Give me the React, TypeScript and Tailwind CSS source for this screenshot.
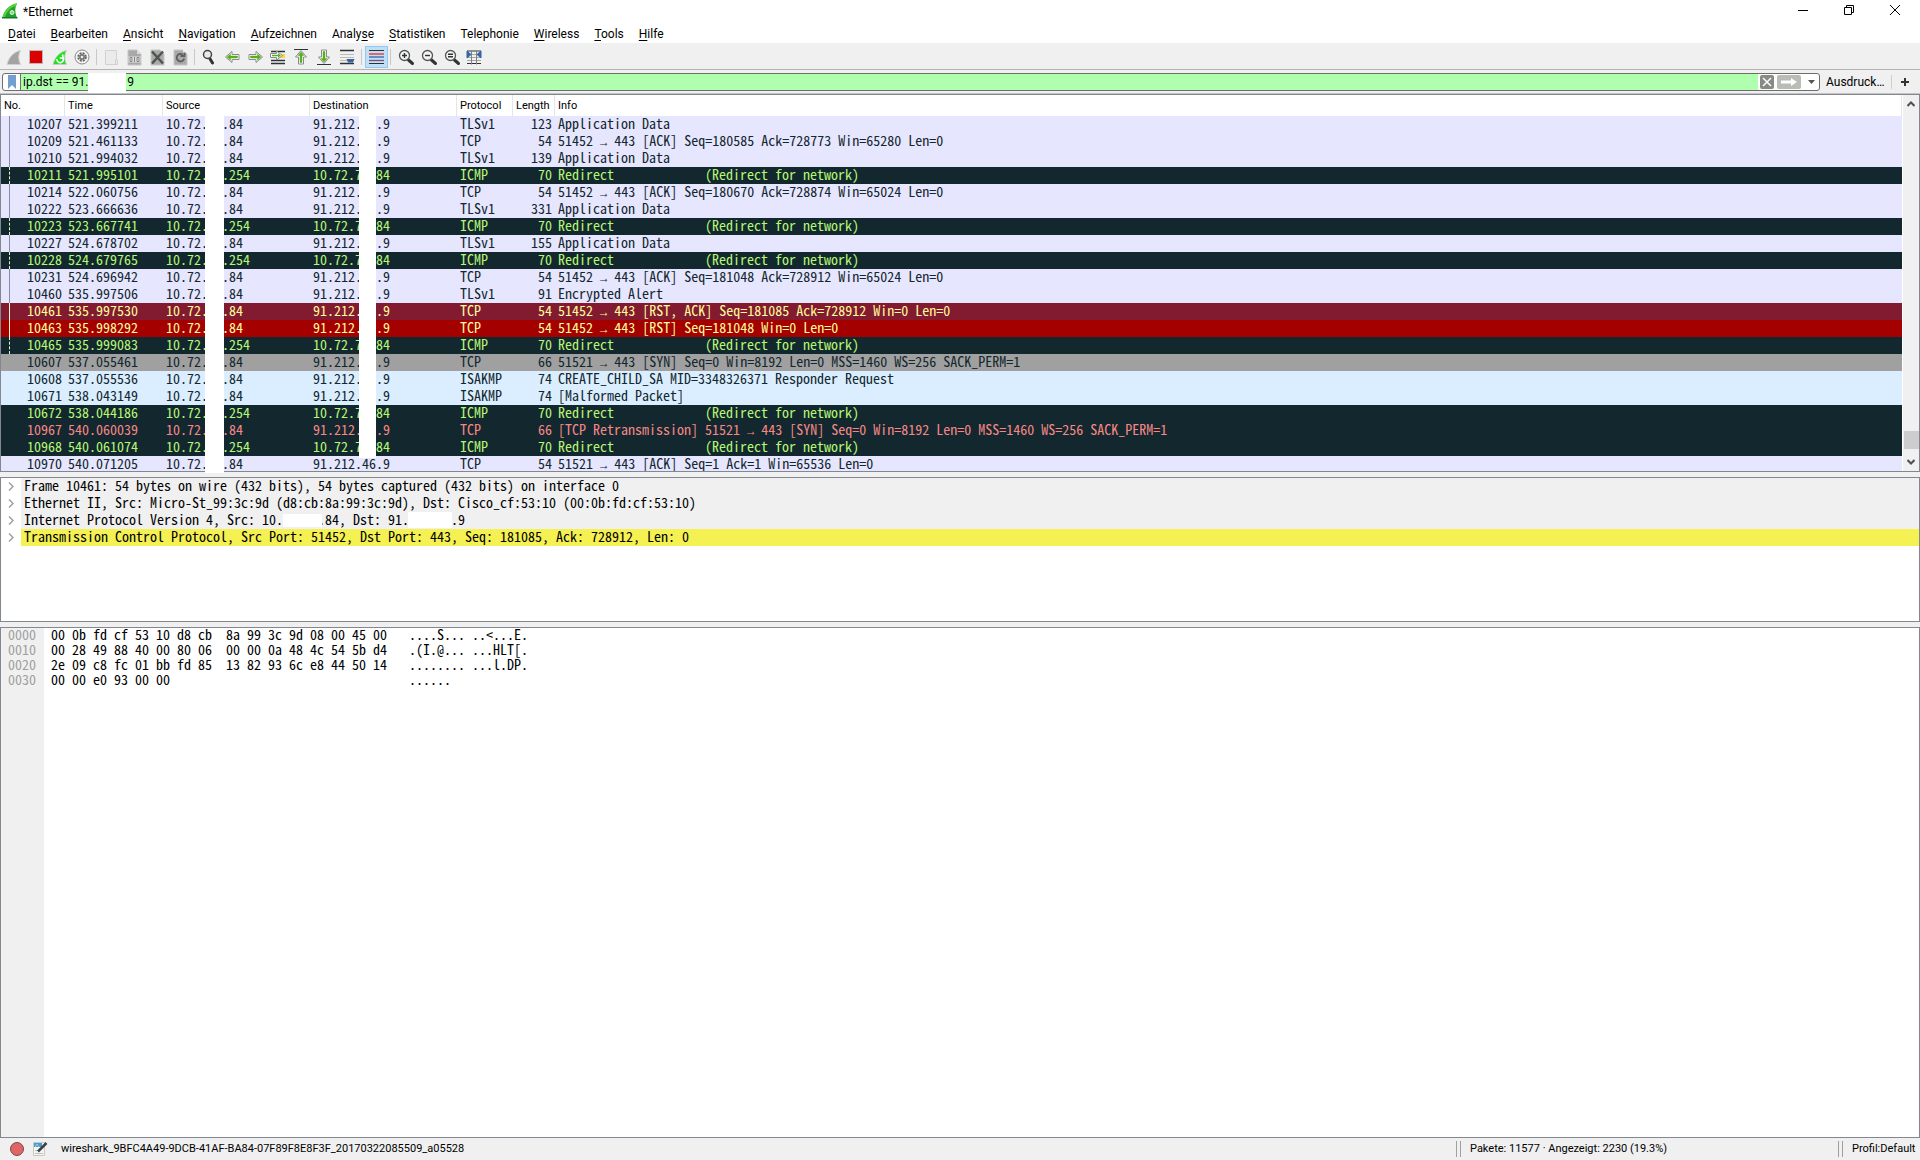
import type { ReactNode } from "react";

type Kind = "tls" | "icmp" | "rstack" | "rst" | "syn" | "isakmp" | "bad";
type Packet = [number, string, string, string, string, number, string, Kind, string];

const kinds: Record<Kind, string> = {
    tls: "bg-[#e7e6ff] text-[#12272e]",
    icmp: "bg-[#12272e] text-[#b7f774]",
    rstack: "bg-[#821a30] text-[#fffc9c]",
    rst: "bg-[#a40000] text-[#fffc9c]",
    syn: "bg-[#a0a0a0] text-[#12272e]",
    isakmp: "bg-[#daeeff] text-[#12272e]",
    bad: "bg-[#12272e] text-[#f78787]",
};

const lines: Record<string, string> = {
    solid: "border-l border-[#8b8aa5]",
    light: "border-l border-[#fffcc8]",
    dashed: "border-l border-dashed border-[#dbfbb9]",
    none: "border-l border-transparent",
};

const HOST = "10.72.  .84";
const GATE = "10.72.  .254";
const DEST = "91.212.  .9";
const BACK = "10.72.7  84";
const REDIRECT = "Redirect             (Redirect for network)";

const packets: Packet[] = [
    [10207, "521.399211", HOST, DEST, "TLSv1", 123, "Application Data", "tls", "solid"],
    [10209, "521.461133", HOST, DEST, "TCP", 54, "51452 → 443 [ACK] Seq=180585 Ack=728773 Win=65280 Len=0", "tls", "solid"],
    [10210, "521.994032", HOST, DEST, "TLSv1", 139, "Application Data", "tls", "solid"],
    [10211, "521.995101", GATE, BACK, "ICMP", 70, REDIRECT, "icmp", "dashed"],
    [10214, "522.060756", HOST, DEST, "TCP", 54, "51452 → 443 [ACK] Seq=180670 Ack=728874 Win=65024 Len=0", "tls", "solid"],
    [10222, "523.666636", HOST, DEST, "TLSv1", 331, "Application Data", "tls", "solid"],
    [10223, "523.667741", GATE, BACK, "ICMP", 70, REDIRECT, "icmp", "dashed"],
    [10227, "524.678702", HOST, DEST, "TLSv1", 155, "Application Data", "tls", "solid"],
    [10228, "524.679765", GATE, BACK, "ICMP", 70, REDIRECT, "icmp", "dashed"],
    [10231, "524.696942", HOST, DEST, "TCP", 54, "51452 → 443 [ACK] Seq=181048 Ack=728912 Win=65024 Len=0", "tls", "solid"],
    [10460, "535.997506", HOST, DEST, "TLSv1", 91, "Encrypted Alert", "tls", "solid"],
    [10461, "535.997530", HOST, DEST, "TCP", 54, "51452 → 443 [RST, ACK] Seq=181085 Ack=728912 Win=0 Len=0", "rstack", "light"],
    [10463, "535.998292", HOST, DEST, "TCP", 54, "51452 → 443 [RST] Seq=181048 Win=0 Len=0", "rst", "light"],
    [10465, "535.999083", GATE, BACK, "ICMP", 70, REDIRECT, "icmp", "dashed"],
    [10607, "537.055461", HOST, DEST, "TCP", 66, "51521 → 443 [SYN] Seq=0 Win=8192 Len=0 MSS=1460 WS=256 SACK_PERM=1", "syn", "none"],
    [10608, "537.055536", HOST, DEST, "ISAKMP", 74, "CREATE_CHILD_SA MID=3348326371 Responder Request", "isakmp", "none"],
    [10671, "538.043149", HOST, DEST, "ISAKMP", 74, "[Malformed Packet]", "isakmp", "none"],
    [10672, "538.044186", GATE, BACK, "ICMP", 70, REDIRECT, "icmp", "none"],
    [10967, "540.060039", HOST, DEST, "TCP", 66, "[TCP Retransmission] 51521 → 443 [SYN] Seq=0 Win=8192 Len=0 MSS=1460 WS=256 SACK_PERM=1", "bad", "none"],
    [10968, "540.061074", GATE, BACK, "ICMP", 70, REDIRECT, "icmp", "none"],
    [10970, "540.071205", HOST, "91.212.46.9", "TCP", 54, "51521 → 443 [ACK] Seq=1 Ack=1 Win=65536 Len=0", "tls", "none"],
];

const details = [
    "Frame 10461: 54 bytes on wire (432 bits), 54 bytes captured (432 bits) on interface 0",
    "Ethernet II, Src: Micro-St_99:3c:9d (d8:cb:8a:99:3c:9d), Dst: Cisco_cf:53:10 (00:0b:fd:cf:53:10)",
    "Internet Protocol Version 4, Src: 10.     .84, Dst: 91.      .9",
    "Transmission Control Protocol, Src Port: 51452, Dst Port: 443, Seq: 181085, Ack: 728912, Len: 0",
];

const hex = [
    ["0000", "00 0b fd cf 53 10 d8 cb  8a 99 3c 9d 08 00 45 00", "....S... ..<...E."],
    ["0010", "00 28 49 88 40 00 80 06  00 00 0a 48 4c 54 5b d4", ".(I.@... ...HLT[."],
    ["0020", "2e 09 c8 fc 01 bb fd 85  13 82 93 6c e8 44 50 14", "........ ...l.DP."],
    ["0030", "00 00 e0 93 00 00", "......"],
];

// label and index of the underlined letter
const menus: [string, number][] = [
    ["Datei", 0], ["Bearbeiten", 0], ["Ansicht", 0], ["Navigation", 0], ["Aufzeichnen", 0], ["Analyse", 5],
    ["Statistiken", 0], ["Telephonie", -1], ["Wireless", 0], ["Tools", 0], ["Hilfe", 0],
];

const UI = "font-[Roboto,'Noto_Sans',sans-serif]";
const MONO = "font-['Noto_Sans_Mono_CJK_SC','Liberation_Mono',monospace] text-[14px]";

const FIN = "M5 18.5C6.5 12 11 6 18.5 4.5C16 9 16.5 14 18.5 18.5Z";
const ARROW_R = "M5 8.5h7v-3l6.5 5.5l-6.5 5.5v-3h-7z";

function Arrow({ turn }: { turn: string }) {
    return (
        <g transform={turn}>
            <path d={ARROW_R} fill="#fff" stroke="#8a8a8a" />
            <path d="M6.500 10h7v-2l3.500 3l-3.500 3v-2h-7z" fill="#57b01c" stroke="#57b01c" strokeWidth=".5" />
        </g>
    );
}

function Lens({ d }: { d: string }) {
    return (
        <>
            <path d="M14.5 14l4 3.5" stroke="#2e3436" strokeWidth="3" strokeLinecap="round" />
            <circle cx="10.5" cy="9.5" r="5" fill="#f4f4f4" stroke="#555" strokeWidth="1.3" />
            <path d={d} stroke="#2e3436" strokeWidth="1.4" />
        </>
    );
}

const doc = <path d="M5 4h9l4 4v11h-13z" fill="#a9aaa8" stroke="#c6c6c6" />;

const tools: ([string, ReactNode] | null)[] = [
    ["Start", <path d={FIN} fill="#a3a3a3" stroke="#d0d0d0" />],
    ["Stopp", <rect x="4.5" y="4.5" width="13" height="13" fill="#dd0000" stroke="#b9b9b9" />],
    ["Neustart", <>
        <path d={FIN} fill="#17e516" stroke="#c9c9c9" />
        <path d="M9 13a3.2 3.2 0 1 0 6-1M14.5 8.500l.7 3.700l-3.500-.2" fill="none" stroke="#fff" strokeWidth="1.7" />
    </>],
    ["Optionen", <>
        <circle cx="11" cy="11" r="7" fill="#f5f5f5" stroke="#888" />
        <circle cx="11" cy="11" r="3.800" fill="none" stroke="#666" strokeWidth="2" strokeDasharray="2 1" />
        <circle cx="11" cy="11" r="3" fill="#777" />
        <circle cx="11" cy="11" r="1.300" fill="#eee" />
    </>],
    null,
    ["Öffnen", <>
        <path d="M5.500 4.500h11v14h-11z" fill="#ebebeb" stroke="#d2d2d2" />
        <path d="M15.500 14h2v4.500h-2z" fill="#eee" stroke="#cfcfcf" />
    </>],
    ["Speichern", <>
        {doc}
        <path d="M14 4v4h4" fill="#ddd" />
        <path d="M5.500 10.500h12v6h-12z" fill="#dedede" />
        <path d="M7 11.500h2v4h-2zM11.500 16v-5M14 11.500h2v4h-2z" fill="none" stroke="#858585" />
    </>],
    ["Schließen", <>
        {doc}
        <path d="M6 5.500l11 12M17 5.500l-11 12" stroke="#4f5350" strokeWidth="2.400" />
    </>],
    ["Neu laden", <>
        {doc}
        <path d="M15.200 12.500a3.800 3.800 0 1 1-1.500-4M15.500 6v4h-4" fill="none" stroke="#5e5e5e" strokeWidth="1.800" />
        <path d="M14 4v2.500h4z" fill="#eee" />
    </>],
    null,
    ["Suchen", <>
        <path d="M11.500 12l3 5" stroke="#2e3436" strokeWidth="3" strokeLinecap="round" />
        <circle cx="9.500" cy="8.500" r="4" fill="#e9e9e9" stroke="#444" strokeWidth="1.500" />
    </>],
    ["Zurück", <Arrow turn="rotate(180 11.5 11)" />],
    ["Vor", <Arrow turn="" />],
    ["Gehe zu", <>
        <path d="M4 5.500h14M4 14.500h14M4 17.500h14" stroke="#2e3436" strokeWidth="1.400" />
        <path d="M13 8h5v4h-5z" fill="#f5d949" />
        <path d="M3.500 7.500h6v-2.500l6 4.500l-6 4.500v-2.500h-6z" fill="#fff" stroke="#8a8a8a" />
        <path d="M5 8.800h6v-1.500l2.800 2.200l-2.800 2.200v-1.500h-6z" fill="#57b01c" />
    </>],
    ["Erstes Paket", <>
        <path d="M4 3.500h14" stroke="#2e3436" />
        <g transform="translate(0 1)"><Arrow turn="rotate(-90 11 11)" /></g>
    </>],
    ["Letztes Paket", <>
        <path d="M4 18.500h14" stroke="#2e3436" />
        <g transform="translate(0 -1)"><Arrow turn="rotate(90 11 11)" /></g>
    </>],
    ["Autoscroll", <>
        <path d="M4 4.500h14M4 17.500h14" stroke="#2e3436" strokeWidth="1.300" />
        <path d="M4 8.500h14M4 11.500h14M4 14.500h8" stroke="#babdb6" />
        <path d="M10.500 13h8l-1.500 3.500h-5z" fill="#3465a4" />
    </>],
    null,
    ["Einfärben", <>
        <path d="M4 4.500h15M4 17.500h15" stroke="#2e3436" />
        <path d="M4 8h15" stroke="#ef2929" strokeWidth="1.300" />
        <path d="M4 11h15" stroke="#3465a4" strokeWidth="1.300" />
        <path d="M4 14.500h15" stroke="#75507b" strokeWidth="1.300" />
    </>],
    null,
    ["Vergrößern", <Lens d="M8 9.5h5M10.5 7v5" />],
    ["Verkleinern", <Lens d="M8 9.5h5" />],
    ["Normalgröße", <Lens d="M8 8.3h5M8 10.8h5" />],
    ["Spaltenbreite", <>
        <path d="M4 5h14M4 17.500h14" stroke="#2e3436" />
        <path d="M4 8.500h14M4 11.500h14M4 14.500h14" stroke="#a5a8a2" />
        <path d="M8.500 4.500v14M13.500 4.500v14" stroke="#7e8284" />
        <path d="M4 5v7l4-3.500zM18 5v7l-4-3.500z" fill="#3465a4" stroke="#3465a4" />
    </>],
];

const winBtn = "flex h-[20px] w-[46px] items-center justify-center";

function TitleBar() {
    return (
        <header className="flex h-[24px] items-start bg-white pl-[2px] pr-[2px]">
            <svg className="mt-[3px]" width="17" height="17" viewBox="0 0 17 17">
                <path d="M.5 14.500C2 8 7 1.500 15 .5C12.500 5 13 10 15 14.500Z" fill="#1fa02a" />
                <path d="M.5 14.500C2 8 7 1.500 15 .5L14 3C8 5 4.500 9 3 14.500Z" fill="#53d13a" />
                <path d="M0 14h15.500v1.500h-15.500z" fill="#167a24" />
                <circle cx="10" cy="9.500" r="2" fill="#8fd98a" stroke="#d7f5d0" />
            </svg>
            <h1 className="ml-[4px] flex-1 text-[12px] leading-[24px]">*Ethernet</h1>
            <button className={winBtn} aria-label="Minimieren">
                <svg width="10" height="10"><path d="M0 5.500h10" stroke="#000" /></svg>
            </button>
            <button className={winBtn} aria-label="Wiederherstellen">
                <svg width="10" height="10"><path d="M.5 2.500h7v7h-7zM2.500 2.500v-2h7v7h-2" fill="none" stroke="#000" /></svg>
            </button>
            <button className={winBtn} aria-label="Fenster schließen">
                <svg width="10" height="10"><path d="M0 0l10 10M10 0l-10 10" stroke="#000" /></svg>
            </button>
        </header>
    );
}

function MenuBar() {
    return (
        <nav className="flex h-[20px] border-b border-[#f0f0f0] bg-white">
            {menus.map(([label, key]) => (
                <button key={label} className="pl-[8px] pr-[7px] pt-[2px] text-[12px] leading-[17px]">
                    {key < 0 ? label : <>{label.slice(0, key)}<u className="underline-offset-2">{label[key]}</u>{label.slice(key + 1)}</>}
                </button>
            ))}
        </nav>
    );
}

function ToolBar() {
    return (
        <div className="flex h-[26px] items-center border-b border-[#b4b4b4] bg-[#f0f0f0] pl-[2px]">
            {tools.map((tool, i) => tool ? (
                <button key={i} aria-label={tool[0]} className={tool[0] === "Einfärben" ? "bg-[#c2def5] outline outline-1 -outline-offset-1 outline-[#90c8f6]" : ""}>
                    <svg width="23" height="22" viewBox="0 0 23 22" fill="none">{tool[1]}</svg>
                </button>
            ) : (
                <span key={i} className="ml-[2px] mr-[3px] h-[16px] w-px bg-[#c8c8c8]" />
            ))}
        </div>
    );
}

function FilterBar() {
    return (
        <div className="flex h-[24px] items-center border-b border-[#c4c4c4] bg-[#f0f0f0] pl-[2px] text-[12px]">
            <div className="relative flex h-[18px] flex-1 items-center rounded-[3px] border border-[#6e6e6e] bg-white">
                <button aria-label="Lesezeichen" className="flex h-full w-[18px] items-center justify-center border-r border-[#6e6e6e]">
                    <svg width="8" height="14"><path d="M0 0h8v14l-4-4l-4 4z" fill="#729fcf" /></svg>
                </button>
                <input aria-label="Anzeigefilter" defaultValue="ip.dst == 91.             9" className="h-full flex-1 bg-[#afffaf] pl-[2px] outline-none" />
                <button aria-label="Filter löschen" className="ml-[2px] flex size-[14px] items-center justify-center rounded-[2px] bg-[#888a85]">
                    <svg width="10" height="10"><path d="M1 1l8 8M9 1l-8 8" stroke="#fff" strokeWidth="1.500" /></svg>
                </button>
                <button aria-label="Filter anwenden" className="ml-[3px] flex h-[14px] w-[24px] items-center justify-center rounded-[2px] bg-[#babdb6]">
                    <svg width="16" height="8"><path d="M0 2.500h10v-2.500l6 4l-6 4v-2.500h-10z" fill="#fff" /></svg>
                </button>
                <button aria-label="Filterverlauf" className="flex h-full w-[18px] items-center justify-center pl-[3px]">
                    <svg width="7" height="4"><path d="M0 0h7l-3.500 4z" fill="#555" /></svg>
                </button>
                <span className="absolute -bottom-[3px] -top-px left-[85px] w-[38px] bg-white" />
            </div>
            <button className="ml-[6px] w-[65px] text-left">Ausdruck…</button>
            <span className="h-[14px] w-px bg-[#d0d0d0]" />
            <button aria-label="Filter hinzufügen" className="flex w-[28px] justify-center pr-[2px]">
                <svg width="8" height="8"><path d="M4 0v8M0 4h8" stroke="#333" strokeWidth="2" /></svg>
            </button>
        </div>
    );
}

// the arrow glyph is double width in the CJK face
function Info({ text }: { text: string }) {
    const [from, to] = text.split("→");
    if (!to) return <>{text}</>;
    return <>{from}<span className="font-['Liberation_Mono',monospace] text-[12px] leading-[0]">→</span>{to}</>;
}

const th = "border-r border-[#e5e5e5] pl-[3px] pt-[2px] text-left font-normal";
const td = "pl-[3px] align-top";

function PacketList() {
    return (
        <section className="relative flex h-[378px] shrink-0 border border-[#828790] bg-white">
            <div className="min-w-0 flex-1 overflow-hidden">
                <table className="w-full table-fixed border-separate border-spacing-0 whitespace-pre">
                    <colgroup>
                        <col className="w-[64px]" /><col className="w-[98px]" /><col className="w-[147px]" /><col className="w-[147px]" />
                        <col className="w-[56px]" /><col className="w-[42px]" /><col />
                    </colgroup>
                    <thead className="text-[11px]">
                        <tr className="h-[21px]">
                            {["No.", "Time", "Source", "Destination", "Protocol", "Length", "Info"].map((h) => (
                                <th key={h} className={th}>{h}</th>
                            ))}
                        </tr>
                    </thead>
                    <tbody className={MONO + " leading-[15px]"}>
                        {packets.map(([no, time, src, dst, proto, len, info, kind, line]) => (
                            <tr key={no} className={"h-[17px] " + kinds[kind]}>
                                <td className="align-top"><div className={"ml-[8px] h-[17px] pr-[3px] text-right " + lines[line]}>{no}</div></td>
                                <td className={td}>{time}</td>
                                <td className={td}>{src}</td>
                                <td className={td}>{dst}</td>
                                <td className={td}>{proto}</td>
                                <td className="pr-[3px] text-right align-top">{len}</td>
                                <td className={td}><Info text={info} /></td>
                            </tr>
                        ))}
                    </tbody>
                </table>
            </div>
            <div className="ml-px flex w-[16px] flex-col items-center justify-between bg-[#f0f0f0]">
                <button aria-label="Nach oben" className="flex h-[18px] items-center">
                    <svg width="8" height="6"><path d="M.5 5l3.500-3.500l3.500 3.500" fill="none" stroke="#505050" strokeWidth="2" /></svg>
                </button>
                <div className="mt-auto h-[18px] w-[15px] bg-[#cdcdcd]" />
                <button aria-label="Nach unten" className="mt-[4px] flex h-[18px] items-center">
                    <svg width="8" height="6"><path d="M.5 1l3.500 3.500l3.500-3.500" fill="none" stroke="#505050" strokeWidth="2" /></svg>
                </button>
            </div>
            {/* blanked parts of the addresses */}
            <span className="absolute -bottom-[2px] left-[204px] top-[21px] w-[19px] bg-white" />
            <span className="absolute bottom-[13px] left-[358px] top-[21px] w-[17px] bg-white" />
        </section>
    );
}

function Details() {
    return (
        <section className={"relative mt-[5px] h-[145px] shrink-0 border border-[#828790] bg-white leading-[15px] " + MONO}>
            {details.map((text, i) => (
                <div key={text} className="flex h-[17px]">
                    <button aria-label="Aufklappen" className="flex w-[20px] items-center pl-[7px]">
                        <svg width="6" height="9"><path d="M1 .5l4 4l-4 4" fill="none" stroke="#a0a0a0" strokeWidth="1.500" /></svg>
                    </button>
                    <div className={"flex-1 whitespace-pre pl-[3px] " + (i === 3 ? "bg-[#f6f153]" : "bg-[#f0f0f0]")}>{text}</div>
                </div>
            ))}
            <span className="absolute left-[282px] top-[36px] h-[13px] w-[39px] bg-white" />
            <span className="absolute left-[407px] top-[34px] h-[16px] w-[44px] bg-white" />
        </section>
    );
}

function HexView() {
    return (
        <section className={"mt-[5px] flex min-h-0 flex-1 whitespace-pre border border-[#828790] bg-white leading-[13px] " + MONO}>
            <div className="w-[43px] bg-[#f0f0f0] pl-[7px] text-[#a0a0a0]">
                {hex.map(([off]) => <div key={off} className="h-[15px]">{off}</div>)}
            </div>
            <div className="w-[365px] pl-[7px]">
                {hex.map(([off, bytes]) => <div key={off} className="h-[15px]">{bytes}</div>)}
            </div>
            <div>
                {hex.map(([off, , ascii]) => <div key={off} className="h-[15px]">{ascii}</div>)}
            </div>
        </section>
    );
}

function Grip() {
    return <span className="h-[16px] w-[5px] shrink-0 border-x border-[#a0a0a0]" />;
}

function StatusBar() {
    return (
        <footer className="flex h-[22px] shrink-0 items-center bg-[#f0f0f0] pl-[10px] pr-[4px] text-[11px]">
            <button aria-label="Experteninfo">
                <svg width="14" height="14"><circle cx="7" cy="7" r="6.500" fill="#e06666" stroke="#7a4a4a" /></svg>
            </button>
            <button aria-label="Kommentar" className="ml-[9px]">
                <svg width="15" height="14">
                    <path d="M.5 .5h11v13h-11z" fill="#f4f4f0" stroke="#c8c8c0" />
                    <path d="M1 1h8v4h-8z" fill="#3f9fd8" />
                    <path d="M2 5l2-3l2 3M2 8.500h3M2 11.500h8" stroke="#b8c4c8" fill="none" />
                    <path d="M5 9.500l8.500-8.500" stroke="#3a3f41" strokeWidth="2.500" />
                </svg>
            </button>
            <span className="ml-[13px] flex-1">wireshark_9BFC4A49-9DCB-41AF-BA84-07F89F8E8F3F_20170322085509_a05528</span>
            <Grip />
            <span className="w-[377px] pl-[9px]">Pakete: 11577 · Angezeigt: 2230 (19.3%)</span>
            <Grip />
            <span className="w-[73px] whitespace-nowrap pl-[9px]">Profil:Default</span>
        </footer>
    );
}

export default function App() {
    return (
        <div className={"flex h-screen flex-col bg-[#f0f0f0] text-black " + UI}>
            <TitleBar />
            <MenuBar />
            <ToolBar />
            <FilterBar />
            <PacketList />
            <Details />
            <HexView />
            <StatusBar />
        </div>
    );
}
